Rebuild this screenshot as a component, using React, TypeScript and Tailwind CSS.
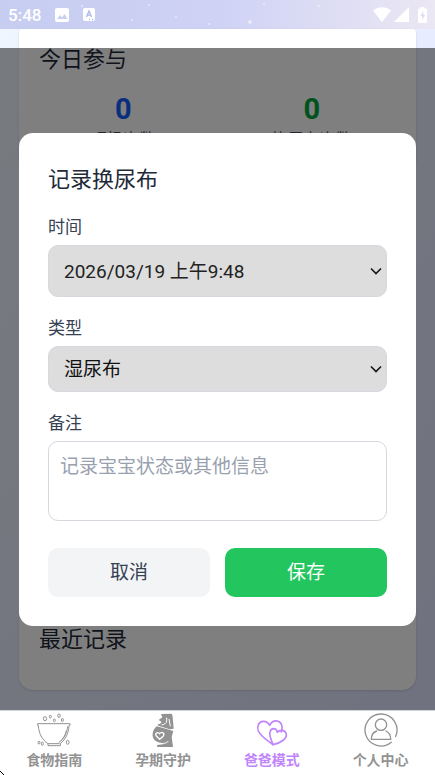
import {useState} from "react";
import type {FormEvent, ReactNode} from "react";

type TabId = "food" | "pregnancy" | "dad" | "profile";

function BowlIcon() {
    return (
        <svg viewBox="0 0 102 102" className="size-[34px]" fill="none" stroke="currentColor" strokeWidth="3" aria-hidden="true">
            <path d="M2 32H99V37H96C95 61 86 79 70 92V98H33V92C15 80 5 61 4 37H2Z"/>
            <path d="M92 40C90 60 81 77 65 89M33 92H68M88 53C85 67 79 78 70 86"/>
            <ellipse cx="24" cy="17" rx="5" ry="6"/>
            <ellipse cx="40" cy="11" rx="3" ry="4"/>
            <ellipse cx="52" cy="22" rx="3" ry="4"/>
            <ellipse cx="66" cy="8" rx="4" ry="5"/>
            <ellipse cx="76" cy="21" rx="3" ry="5"/>
            <ellipse cx="6" cy="89" rx="3" ry="4"/>
            <ellipse cx="16" cy="92" rx="3" ry="5"/>
            <ellipse cx="92" cy="88" rx="4" ry="6"/>
        </svg>
    );
}

function PregnancyIcon() {
    return (
        <svg viewBox="0 0 102 102" className="size-[34px]" fill="currentColor" aria-hidden="true">
            <path d="M45 3L76 2C79 5 80 8 80 13L83 47L71 49L37 38L35 34C43 33 46 31 46 26L38 21L49 13Z"/>
            <path d="M33 40L82 54L77 71L81 102H34L33 96L52 94L51 90C29 89 18 77 20 62C21 52 26 44 33 40Z"/>
            <path d="M62 14V24C62 31 55 34 47 36M69 18L73 40" fill="none" stroke="#fff" strokeWidth="3"/>
            <path d="M41 79L31 69C26 62 34 55 41 62C48 54 57 61 52 69Z" fill="none" stroke="#fff" strokeWidth="4"/>
            <path d="M52 91C60 91 64 88 67 84" fill="none" stroke="#fff" strokeWidth="3"/>
        </svg>
    );
}

function HeartsIcon() {
    return (
        <svg viewBox="0 0 102 102" className="size-[34px]" fill="none" stroke="currentColor" strokeWidth="5" strokeLinecap="round" strokeLinejoin="round" aria-hidden="true">
            <path d="M54 95C38 83 17 70 10 54C5 39 12 26 24 25C34 24 40 29 44 37C49 27 57 22 67 24C80 27 85 42 79 57"/>
            <path d="M54 95C49 82 42 68 45 57C48 44 64 43 67 58C74 49 89 50 93 61C99 77 78 89 54 95Z"/>
        </svg>
    );
}

function ProfileIcon() {
    return (
        <svg viewBox="0 0 102 102" className="size-[34px]" fill="none" stroke="currentColor" strokeWidth="4" strokeLinecap="round" aria-hidden="true">
            <path d="M94.900 70.500A48 48 0 1 0 81.900 87.800"/>
            <circle cx="51" cy="35" r="17"/>
            <path d="M38 54C27 58 22 67 22 79H80C80 67 75 58 66 54"/>
        </svg>
    );
}

const tabs: { id: TabId; label: string; icon: ReactNode }[] = [
    {id: "food", label: "食物指南", icon: <BowlIcon/>},
    {id: "pregnancy", label: "孕期守护", icon: <PregnancyIcon/>},
    {id: "dad", label: "爸爸模式", icon: <HeartsIcon/>},
    {id: "profile", label: "个人中心", icon: <ProfileIcon/>},
];

function StatusBar() {
    return (
        <header className="relative flex h-[29px] shrink-0 items-center justify-between bg-linear-to-r from-[#c6cdf0] via-[#cfd2f5] to-[#ebe7f3] px-2 text-white">
            <svg className="absolute inset-0 size-full" fill="#fff" fillOpacity="0.5" aria-hidden="true">
                <circle cx="82" cy="6" r="1"/>
                <circle cx="132" cy="20" r="1"/>
                <circle cx="149" cy="5" r="1"/>
                <circle cx="176" cy="17" r="1"/>
                <circle cx="209" cy="24" r="1"/>
                <circle cx="250" cy="22" r="2"/>
                <circle cx="264" cy="4" r="1"/>
                <circle cx="319" cy="6" r="1"/>
            </svg>
            <div className="relative flex items-center gap-[14px]">
                <span className="text-[17px] leading-5 font-medium">5:48</span>
                <svg viewBox="0 0 14 14" className="size-[14px]" aria-hidden="true">
                    <rect width="14" height="14" rx="2" fill="currentColor"/>
                    <path d="M2 11L5 7L7 9.500L9.500 6L12.500 11Z" fill="#c9cff2"/>
                </svg>
                <svg viewBox="0 0 12 14" className="h-[14px] w-3" aria-hidden="true">
                    <rect width="12" height="13" rx="2" fill="currentColor"/>
                    <path d="M3.500 9L6 3L8.500 9M4.300 7.200H7.700M6 11.500H7M9 11.500H10" fill="none" stroke="#aeb6e6" strokeWidth="1.300"/>
                </svg>
            </div>
            <div className="relative flex items-center gap-[3px]">
                <svg viewBox="0 0 18 15" className="h-[15px] w-[18px]" fill="currentColor" aria-hidden="true">
                    <path d="M0 3.500C5 -1 13 -1 18 3.500L9 15Z"/>
                </svg>
                <svg viewBox="0 0 15 15" className="size-[15px]" fill="currentColor" aria-hidden="true">
                    <path d="M15 0V15H0Z"/>
                </svg>
                <svg viewBox="0 0 9 16" className="ml-[6px] h-4 w-[9px]" aria-hidden="true">
                    <path d="M2.500 0H6.500V1.500H8Q9 1.500 9 2.500V15Q9 16 8 16H1Q0 16 0 15V2.500Q0 1.500 1 1.500H2.500Z" fill="currentColor"/>
                    <path d="M5.500 4L2.500 9H4.300V13L7 8H5.200Z" fill="#dcd9f0"/>
                </svg>
            </div>
        </header>
    );
}

function Chevron() {
    return (
        <svg viewBox="0 0 12 8" className="pointer-events-none absolute top-1/2 right-[5px] h-2 w-3 -translate-y-1/2" fill="none" stroke="#1a1a1a" strokeWidth="1.700" aria-hidden="true">
            <path d="M1 1.500L6 6.500L11 1.500"/>
        </svg>
    );
}

function DiaperDialog({onClose}: { onClose: () => void }) {
    const [time, setTime] = useState("2026/03/19 上午9:48");
    const [type, setType] = useState("湿尿布");
    const [note, setNote] = useState("");

    const handleSubmit = (event: FormEvent) => {
        event.preventDefault();
        onClose();
    };

    return (
        <div className="absolute inset-x-0 top-[19px] bottom-0 flex items-center bg-black/50 px-[19px]">
            <form role="dialog" aria-modal="true" aria-labelledby="dialog-title" onSubmit={handleSubmit}
                  className="flex w-full flex-col gap-[18px] rounded-[14px] bg-white px-[29px] pt-[30px] pb-[29px]">
                <h2 id="dialog-title" className="text-[22px] leading-[33px] text-gray-800">记录换尿布</h2>
                <div>
                    <label htmlFor="time" className="mb-[5px] block text-[17px] leading-[26px] text-gray-700">时间</label>
                    <div className="relative">
                        <select id="time" value={time} onChange={(e) => setTime(e.target.value)}
                                className="h-[52px] w-full appearance-none rounded-[10px] border border-[#d5d8de] bg-[#dddddd] px-[15px] pt-1 text-[19px] text-[#222222]">
                            <option>2026/03/19 上午9:48</option>
                        </select>
                        <Chevron/>
                    </div>
                </div>
                <div>
                    <label htmlFor="type" className="mb-[5px] block text-[17px] leading-[26px] text-gray-700">类型</label>
                    <div className="relative">
                        <select id="type" value={type} onChange={(e) => setType(e.target.value)}
                                className="h-[46px] w-full appearance-none rounded-[10px] border border-[#d5d8de] bg-[#dddddd] px-[15px] pt-1 text-[19px] text-[#111111]">
                            <option>湿尿布</option>
                            <option>脏尿布</option>
                        </select>
                        <Chevron/>
                    </div>
                </div>
                <div>
                    <label htmlFor="note" className="mb-[5px] block text-[17px] leading-[26px] text-gray-700">备注</label>
                    <textarea id="note" value={note} onChange={(e) => setNote(e.target.value)}
                              placeholder="记录宝宝状态或其他信息"
                              className="block h-20 w-full resize-none rounded-[10px] border border-[#d5d8de] px-[11px] py-[10px] text-[19px] leading-[29px] text-gray-800 placeholder:text-gray-400"/>
                </div>
                <div className="mt-[9px] grid grid-cols-2 gap-[15px]">
                    <button type="button" onClick={onClose}
                            className="h-[49px] rounded-[10px] bg-gray-100 pt-[3px] text-[19px] text-gray-700">
                        取消
                    </button>
                    <button type="submit" className="h-[49px] rounded-[10px] bg-[#22c55e] pt-[3px] text-[19px] text-white">
                        保存
                    </button>
                </div>
            </form>
        </div>
    );
}

export default function App() {
    const [open, setOpen] = useState(true);
    const [activeTab, setActiveTab] = useState<TabId>("dad");

    return (
        <div className="flex h-dvh w-full flex-col overflow-hidden bg-white font-['Roboto','Noto_Sans_CJK_SC',sans-serif]">
            <StatusBar/>
            <main className="relative flex flex-1 flex-col justify-between bg-linear-to-br from-[#eff6ff] to-[#e0e4ff] px-[19px] pb-5">
                <section className="rounded-t-[4px] rounded-b-[14px] bg-white px-5 pt-[14px] pb-5 shadow-sm">
                    <h2 className="text-[22px] leading-[33px] text-gray-800">今日参与</h2>
                    <div className="mt-4 grid grid-cols-2 gap-5 text-center">
                        <div>
                            <p className="text-[29px] leading-[34px] font-bold text-blue-600">0</p>
                            <p className="mt-[2px] text-base text-gray-600">喂奶次数</p>
                        </div>
                        <div>
                            <p className="text-[29px] leading-[34px] font-bold text-green-600">0</p>
                            <p className="mt-[2px] text-base text-gray-600">换尿布次数</p>
                        </div>
                    </div>
                </section>
                <section className="rounded-[14px] bg-white px-5 pt-5 pb-[34px] shadow-sm">
                    <h2 className="text-[22px] leading-[33px] text-gray-800">最近记录</h2>
                </section>
                {open && <DiaperDialog onClose={() => setOpen(false)}/>}
            </main>
            <nav className="relative grid h-[65px] shrink-0 grid-cols-4 border-t border-gray-300 bg-white">
                {tabs.map((tab) => (
                    <button key={tab.id} type="button" onClick={() => setActiveTab(tab.id)}
                            className={`flex flex-col items-center gap-[3px] pt-[2px] text-[14px] leading-5 font-bold ${activeTab === tab.id ? "text-[#c084fc]" : "text-[#929292]"}`}>
                        {tab.icon}
                        <span>{tab.label}</span>
                    </button>
                ))}
                <svg viewBox="0 0 4 4" className="absolute bottom-0 left-0 size-1" fill="none" stroke="#000" aria-hidden="true">
                    <path d="M0 0L4 4"/>
                </svg>
            </nav>
        </div>
    );
}
